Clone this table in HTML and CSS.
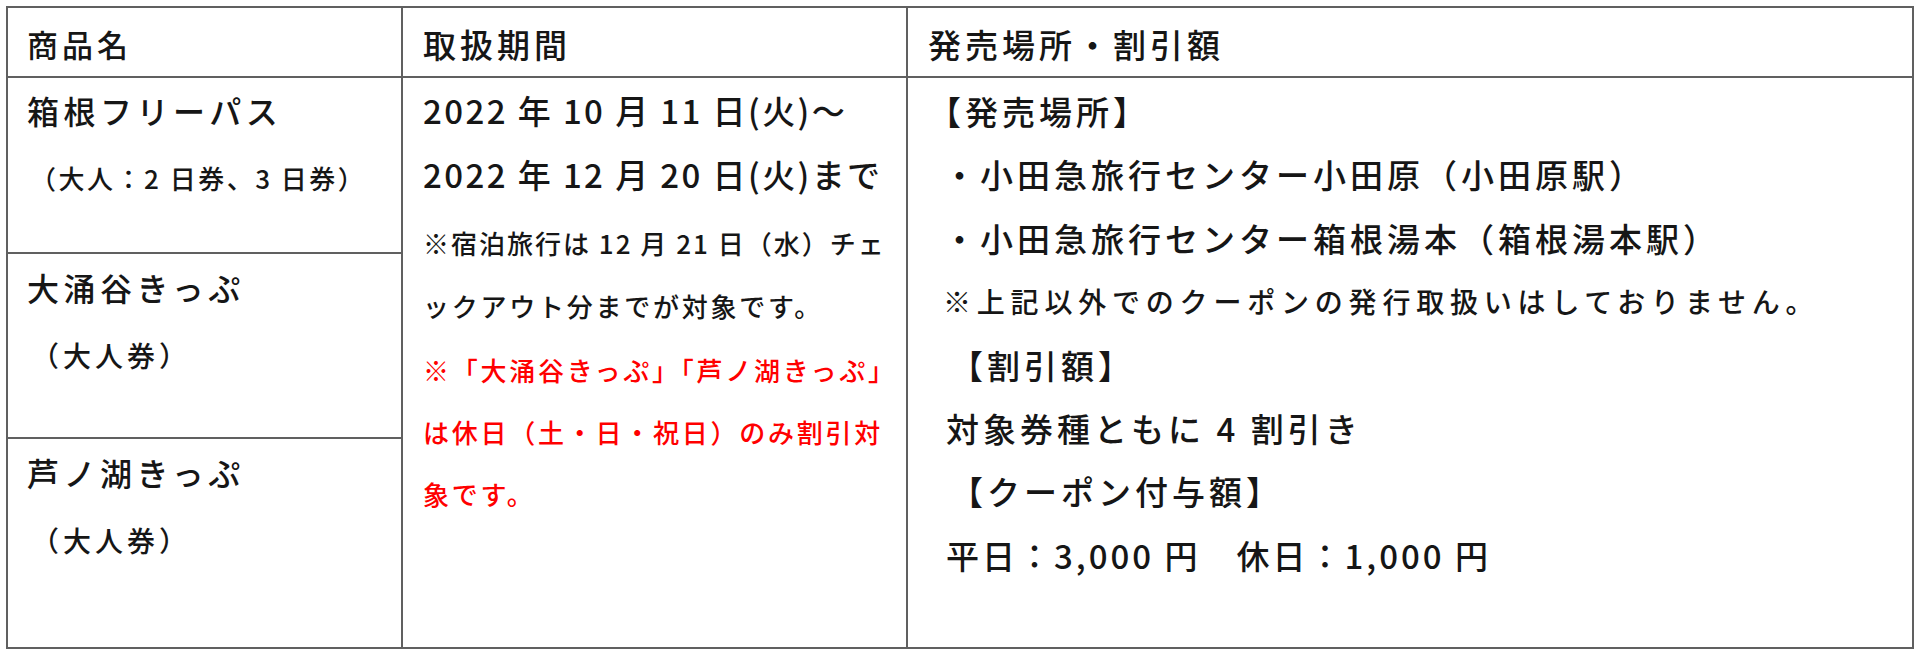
FILE: index.html
```html
<!DOCTYPE html>
<html lang="ja">
<head>
<meta charset="utf-8">
<title>クーポン対象商品</title>
<link rel="stylesheet" href="styles.css">
</head>
<body>
<table class="promo">
  <colgroup>
    <col class="col-item">
    <col class="col-period">
    <col class="col-shop">
  </colgroup>
  <thead>
    <tr class="head">
      <th class="th-item">商品名</th>
      <th>取扱期間</th>
      <th>発売場所・割引額</th>
    </tr>
  </thead>
  <tbody>
    <tr class="r1">
      <td class="item">
        <div class="item-name">箱根フリーパス</div>
        <div class="item-sub small">（大人：2 日券、3 日券）</div>
      </td>
      <td class="period" rowspan="3">
        <div class="line-lg">2022 年 10 月 11 日(火)～</div>
        <div class="line-lg">2022 年 12 月 20 日(火)まで</div>
        <p class="note">
          <span class="note-line tight">※宿泊旅行は 12 月 21 日（水）チェ</span>
          <span class="note-line">ックアウト分までが対象です。</span>
        </p>
        <p class="note red">
          <span class="note-line">※「大涌谷きっぷ」「芦ノ湖きっぷ」</span>
          <span class="note-line">は休日（土・日・祝日）のみ割引対</span>
          <span class="note-line">象です。</span>
        </p>
      </td>
      <td class="shop" rowspan="3">
        <div class="line-lg">【発売場所】</div>
        <div class="line-lg ind-a">・小田急旅行センター小田原（小田原駅）</div>
        <div class="line-lg ind-a">・小田急旅行センター箱根湯本（箱根湯本駅）</div>
        <div class="line-md ind-a">※上記以外でのクーポンの発行取扱いはしておりません。</div>
        <div class="line-lg ind-c">【割引額】</div>
        <div class="line-lg ind-b">対象券種ともに 4 割引き</div>
        <div class="line-lg ind-c">【クーポン付与額】</div>
        <div class="line-lg ind-b amount">平日：3,000 円　休日：1,000 円</div>
      </td>
    </tr>
    <tr class="r2">
      <td class="item pad">
        <div class="item-name">大涌谷きっぷ</div>
        <div class="item-sub">（大人券）</div>
      </td>
    </tr>
    <tr class="r3">
      <td class="item pad">
        <div class="item-name">芦ノ湖きっぷ</div>
        <div class="item-sub">（大人券）</div>
      </td>
    </tr>
  </tbody>
</table>
</body>
</html>
```

FILE: styles.css
```css
* { box-sizing: border-box; }

html, body {
  margin: 0;
  padding: 0;
  background: #ffffff;
}

body {
  font-family: "Noto Sans CJK JP", "Noto Sans", sans-serif;
  color: #161616;
}

.promo {
  border-collapse: collapse;
  table-layout: fixed;
  width: 1908px;
  margin: 6px 0 0 6px;
}

.col-item { width: 395px; }
.col-period { width: 505px; }
.col-shop { width: 1006px; }

.promo th,
.promo td {
  border: 2px solid #606060;
  vertical-align: top;
  text-align: left;
  font-weight: 500;
  padding: 0;
  white-space: nowrap;
}

.head { height: 70px; }

.promo .head th {
  padding: 4px 0 0 20px;
  font-size: 33px;
  letter-spacing: 4px;
  line-height: 64px;
}

.promo .head .th-item {
  padding-left: 19px;
  font-size: 31px;
  letter-spacing: 4px;
}

.r1 { height: 176px; }
.r2 { height: 185px; }
.r3 { height: 210px; }

/* column 1 */
.promo .item {
  padding: 0 0 0 19px;
}

.promo .item.pad { padding-top: 1px; }

.item-name {
  font-size: 32px;
  letter-spacing: 4.5px;
  line-height: 64px;
}

.item-sub {
  margin-top: 4px;
  padding-left: 4px;
  font-size: 28px;
  letter-spacing: 4px;
  line-height: 64px;
}

.item-sub.small {
  padding-left: 3px;
  font-size: 26px;
  letter-spacing: 2.5px;
}

/* column 2 */
.promo .period {
  padding: 1px 0 0 20px;
}

.line-lg {
  font-size: 33px;
  letter-spacing: 4px;
  line-height: 63.5px;
}

.period .line-lg {
  letter-spacing: 2.4px;
}

.note {
  margin: 5px 0 0;
  font-size: 26px;
  letter-spacing: 2.75px;
  line-height: 63px;
}

.note.red {
  margin-top: 2px;
  color: #ff0000;
  line-height: 62px;
}

.note-line { display: block; }

.note-line.tight { letter-spacing: 2px; }

/* column 3 */
.promo .shop {
  padding: 2px 0 0 20px;
}

.shop .line-lg { line-height: 63.4px; }

.shop .amount { letter-spacing: 3px; }

.line-md {
  font-size: 28px;
  letter-spacing: 5.8px;
  line-height: 63.4px;
}

.ind-a { padding-left: 15px; }
.ind-b { padding-left: 18px; }
.ind-c { padding-left: 22px; }
```
